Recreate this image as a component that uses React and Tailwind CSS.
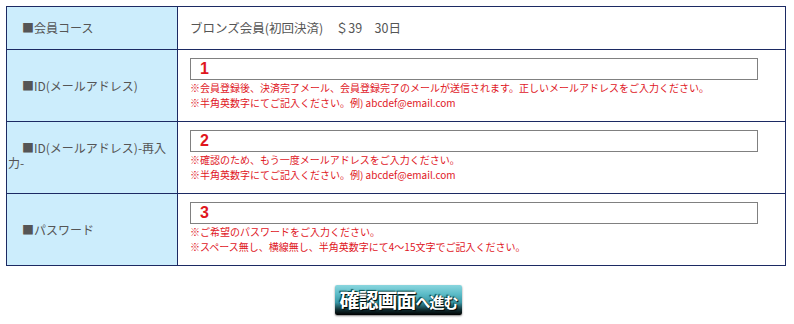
import React from "react";

const Note = ({ lines }) => (
  <div className="mt-[1px] text-[10px] text-[#e0161e]">
    {lines.map((l, i) => (
      <div key={i} className="h-[14.5px] leading-[14.5px]">{l}</div>
    ))}
  </div>
);

const Field = ({ num }) => (
  <div className="h-[22px] w-[568px] border border-[#808080] bg-white pl-[9px] flex items-center">
    <span className="text-[16px] leading-none font-bold text-[#e0161e] font-['Liberation_Sans',sans-serif]">{num}</span>
  </div>
);

export default function App() {
  return (
    <div className="w-[794px] h-[324px] bg-white font-['Noto_Sans_CJK_JP',sans-serif] overflow-hidden">
      <div className="pl-[6px] pt-[6px]">
        <div className="w-[780px] border border-[#1c2a63]">
          {/* row 1 */}
          <div className="flex h-[42px]">
            <div className="w-[171px] shrink-0 border-r border-[#1c2a63] bg-[#ccedfc] flex items-center pl-[15px] text-[12px] text-[#555]">
              ■会員コース
            </div>
            <div className="flex-1 flex items-center pl-[12px] text-[12.5px] text-[#555]">
              ブロンズ会員(初回決済)　＄39　30日
            </div>
          </div>
          {/* row 2 */}
          <div className="flex h-[72px] border-t border-[#1c2a63]">
            <div className="w-[171px] shrink-0 border-r border-[#1c2a63] bg-[#ccedfc] flex items-center pl-[15px] text-[12px] text-[#555]">
              ■ID(メールアドレス)
            </div>
            <div className="flex-1 pl-[12px] pt-[8px]">
              <Field num="1" />
              <Note
                lines={[
                  "※会員登録後、決済完了メール、会員登録完了のメールが送信されます。正しいメールアドレスをご入力ください。",
                  "※半角英数字にてご記入ください。例) abcdef@email.com",
                ]}
              />
            </div>
          </div>
          {/* row 3 */}
          <div className="flex h-[72px] border-t border-[#1c2a63]">
            <div className="w-[171px] shrink-0 border-r border-[#1c2a63] bg-[#ccedfc] flex items-center pl-[1px] text-[12px] leading-[15px] text-[#555]">
              <div className="indent-[14px] pb-[6px]">
                ■ID(メールアドレス)-再入
                <br />
                力-
              </div>
            </div>
            <div className="flex-1 pl-[12px] pt-[8px]">
              <Field num="2" />
              <Note
                lines={[
                  "※確認のため、もう一度メールアドレスをご入力ください。",
                  "※半角英数字にてご記入ください。例) abcdef@email.com",
                ]}
              />
            </div>
          </div>
          {/* row 4 */}
          <div className="flex h-[72px] border-t border-[#1c2a63]">
            <div className="w-[171px] shrink-0 border-r border-[#1c2a63] bg-[#ccedfc] flex items-center pl-[15px] text-[12px] text-[#555]">
              ■パスワード
            </div>
            <div className="flex-1 pl-[12px] pt-[8px]">
              <Field num="3" />
              <Note
                lines={[
                  "※ご希望のパスワードをご入力ください。",
                  "※スペース無し、横線無し、半角英数字にて4～15文字でご記入ください。",
                ]}
              />
            </div>
          </div>
        </div>
      </div>
      <div className="flex justify-center pt-[19px] pl-[3px]">
        <div className="w-[127px] h-[30px] rounded-[2px] flex items-center justify-center bg-[linear-gradient(to_bottom,#8ad6de_0%,#5cbcc8_30%,#3a98a6_58%,#123034_82%,#000_100%)] shadow-[0_1px_2px_rgba(0,0,0,0.5)]">
          <span className="font-bold text-white text-[20px] leading-none tracking-[-1px] [text-shadow:1px_1px_1px_#000,-1px_-1px_1px_#044]">
            確認画面
          </span>
          <span className="font-bold text-white text-[15px] leading-none tracking-[-1px] [text-shadow:1px_1px_1px_#000,-1px_-1px_1px_#044] mt-[3px]">
            へ進む
          </span>
        </div>
      </div>
    </div>
  );
}
